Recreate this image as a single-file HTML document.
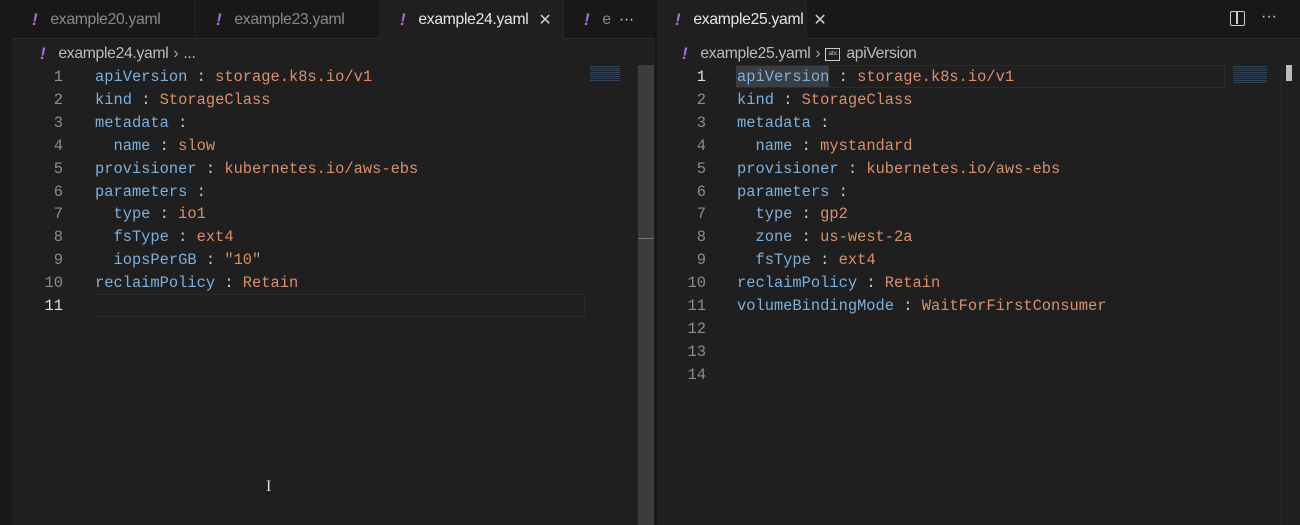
<!DOCTYPE html>
<html><head><meta charset="utf-8"><style>
*{margin:0;padding:0;box-sizing:border-box}
body{width:1300px;height:525px;background:#1f1f1f;overflow:hidden;position:relative;font-family:"Liberation Sans",sans-serif}
.strip{position:absolute;left:0;top:0;width:12px;height:525px;background:#181818}
.tabs{position:absolute;top:0;height:39px;background:#181818;border-bottom:1px solid #2a2a2a}
.tab{position:absolute;top:0;height:39px;display:flex;align-items:center;font-size:15.7px;color:#8a8a8a;letter-spacing:-0.3px;border-right:1px solid #252525}
.tab.act{background:#1f1f1f;color:#e6e6e6;height:40px}
.ex{color:#a66fd6;font-style:italic;font-weight:bold;font-size:17px;margin:0 13px 0 0}
.x{margin-left:10px;font-size:16px;color:#ccc}
.crumb{position:absolute;top:44px;font-size:15.7px;color:#bdbdbd;display:flex;align-items:center;letter-spacing:-0.3px}
.code{position:absolute;top:66px;font-family:"Liberation Mono",monospace;font-size:15.4px;line-height:22.9px;white-space:pre}
.ln{position:absolute;top:66px;font-family:"Liberation Mono",monospace;font-size:15.4px;line-height:22.9px;color:#8c8c8c;text-align:right;width:30px;white-space:pre}
.k{color:#7cb0dc}.v{color:#d9906a}.p{color:#cccccc}
.sb{position:absolute;background:#3c3c3e}
</style></head><body>
<div class="strip"></div>
<div class="tabs" style="left:12px;width:643px">
 <div class="tab" style="left:0;width:184px;padding-left:20px"><span class="ex">!</span>example20.yaml</div>
 <div class="tab" style="left:184px;width:184px;padding-left:20px"><span class="ex">!</span>example23.yaml</div>
 <div class="tab act" style="left:368px;width:184px;padding-left:20px"><span class="ex">!</span>example24.yaml<span class="x">✕</span></div>
 <div class="tab" style="left:552px;width:91px;padding-left:20px;border:none"><span class="ex">!</span>e<span style="margin-left:8px;color:#ccc;font-size:16px">···</span></div>
</div>
<div style="position:absolute;left:655px;top:0;width:2px;height:525px;background:#151515"></div>
<div class="tabs" style="left:657px;width:643px">
 <div class="tab act" style="left:0;width:150px;padding-left:18px"><span class="ex">!</span>example25.yaml<span class="x">✕</span></div>
 <div style="position:absolute;left:573px;top:11px;width:15px;height:15px;border:1.5px solid #ccc;border-radius:2px"><div style="position:absolute;left:5px;top:0;width:1.5px;height:12px;background:#ccc"></div></div>
 <div style="position:absolute;left:604px;top:8px;color:#ccc;font-size:16px">···</div>
</div>
<div class="crumb" style="left:40px"><span class="ex" style="margin-right:13px">!</span>example24.yaml<span style="margin:0 5px;color:#aaa">›</span>...</div>
<div class="crumb" style="left:682px"><span class="ex" style="margin-right:13px">!</span>example25.yaml<span style="margin:0 5px;color:#aaa">›</span><span style="display:inline-block;width:15px;height:13px;border:1px solid #ccc;font-size:6px;line-height:11px;text-align:center;margin-right:6px">abc</span>apiVersion</div>

<div class="ln" style="left:33px">1
2
3
4
5
6
7
8
9
10
<span style="color:#ddd">11</span></div>
<div style="position:absolute;left:94px;top:294px;width:491px;height:23px;border:1px solid #2b2b2b;border-left:none"></div>
<div class="code" style="left:95px"><span class="k">apiVersion</span><span class="p"> : </span><span class="v">storage.k8s.io/v1</span>
<span class="k">kind</span><span class="p"> : </span><span class="v">StorageClass</span>
<span class="k">metadata</span><span class="p"> :</span>
<span class="k">  name</span><span class="p"> : </span><span class="v">slow</span>
<span class="k">provisioner</span><span class="p"> : </span><span class="v">kubernetes.io/aws-ebs</span>
<span class="k">parameters</span><span class="p"> :</span>
<span class="k">  type</span><span class="p"> : </span><span class="v">io1</span>
<span class="k">  fsType</span><span class="p"> : </span><span class="v">ext4</span>
<span class="k">  iopsPerGB</span><span class="p"> : </span><span class="v">"10"</span>
<span class="k">reclaimPolicy</span><span class="p"> : </span><span class="v">Retain</span>
</div>
<div style="position:absolute;left:590px;top:66px;width:30px;height:16px;background:repeating-linear-gradient(#4a6a8a 0 1px,transparent 1px 2px);opacity:.5"></div>
<div class="sb" style="left:638px;top:65px;width:16px;height:460px"></div>
<div style="position:absolute;left:638px;top:238px;width:16px;height:1px;background:#777"></div>
<div style="position:absolute;left:266px;top:478px;color:#ddd;font-size:16px;font-family:'Liberation Serif',serif">I</div>

<div class="ln" style="left:676px"><span style="color:#ddd">1</span>
2
3
4
5
6
7
8
9
10
11
12
13
14</div>
<div style="position:absolute;left:735px;top:65px;width:490px;height:23px;border:1px solid #2b2b2b;border-left:none"></div>
<div style="position:absolute;left:736px;top:66px;width:93px;height:21px;background:#3a3d41"></div>
<div class="code" style="left:737px"><span class="k">apiVersion</span><span class="p"> : </span><span class="v">storage.k8s.io/v1</span>
<span class="k">kind</span><span class="p"> : </span><span class="v">StorageClass</span>
<span class="k">metadata</span><span class="p"> :</span>
<span class="k">  name</span><span class="p"> : </span><span class="v">mystandard</span>
<span class="k">provisioner</span><span class="p"> : </span><span class="v">kubernetes.io/aws-ebs</span>
<span class="k">parameters</span><span class="p"> :</span>
<span class="k">  type</span><span class="p"> : </span><span class="v">gp2</span>
<span class="k">  zone</span><span class="p"> : </span><span class="v">us-west-2a</span>
<span class="k">  fsType</span><span class="p"> : </span><span class="v">ext4</span>
<span class="k">reclaimPolicy</span><span class="p"> : </span><span class="v">Retain</span>
<span class="k">volumeBindingMode</span><span class="p"> : </span><span class="v">WaitForFirstConsumer</span>
</div>
<div style="position:absolute;left:1233px;top:66px;width:34px;height:18px;background:repeating-linear-gradient(#4a6a8a 0 1px,transparent 1px 2px);opacity:.5"></div>
<div style="position:absolute;left:1281px;top:65px;width:1px;height:460px;background:#2a2a2a"></div>
<div style="position:absolute;left:1286px;top:65px;width:6px;height:16px;background:#bbb"></div>
</body></html>
